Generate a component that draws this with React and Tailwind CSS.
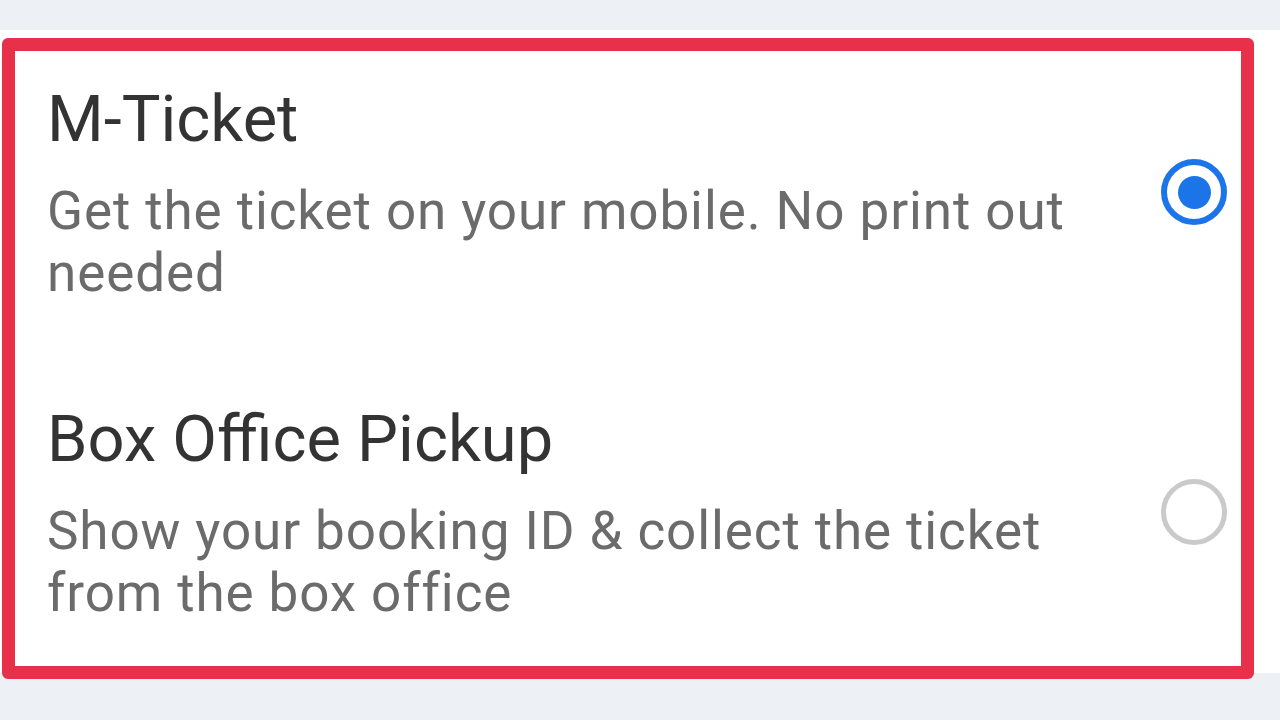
import React from 'react';

const options = [
  {
    id: 'mticket',
    title: 'M-Ticket',
    desc: 'Get the ticket on your mobile. No print out needed',
    selected: true,
  },
  {
    id: 'boxoffice',
    title: 'Box Office Pickup',
    desc: 'Show your booking ID & collect the ticket from the box office',
    selected: false,
  },
];

function Radio({ checked }) {
  if (checked) {
    return (
      <div className="w-[66px] h-[66px] rounded-full border-[6px] border-[#1c74e9] flex items-center justify-center shrink-0">
        <div className="w-[33px] h-[33px] rounded-full bg-[#1c74e9]" />
      </div>
    );
  }
  return <div className="w-[66px] h-[66px] rounded-full border-[5px] border-[#cacaca] shrink-0" />;
}

export default function App() {
  return (
    <div className="min-h-screen w-full bg-[#edf0f4] pt-[30px] font-['Roboto',sans-serif] relative">
      <div className="bg-white h-[643px] w-full pt-[50px] pl-[47px] pr-[53px] flex flex-col gap-[96px]">
        {options.map((opt) => (
          <div key={opt.id} className="flex items-center justify-between">
            <div className="w-[1070px]">
              <p className="text-[65px] leading-[78px] text-[#333333]">{opt.title}</p>
              <p className="mt-[22px] text-[53px] leading-[62px] tracking-[0.9px] text-[#6b6b6b]">{opt.desc}</p>
            </div>
            <Radio checked={opt.selected} />
          </div>
        ))}
      </div>
      {/* highlight frame drawn over the options */}
      <div className="absolute left-[2px] top-[38px] w-[1252px] h-[641px] border-[13px] border-[#e8304a] rounded-[6px] pointer-events-none" />
    </div>
  );
}
